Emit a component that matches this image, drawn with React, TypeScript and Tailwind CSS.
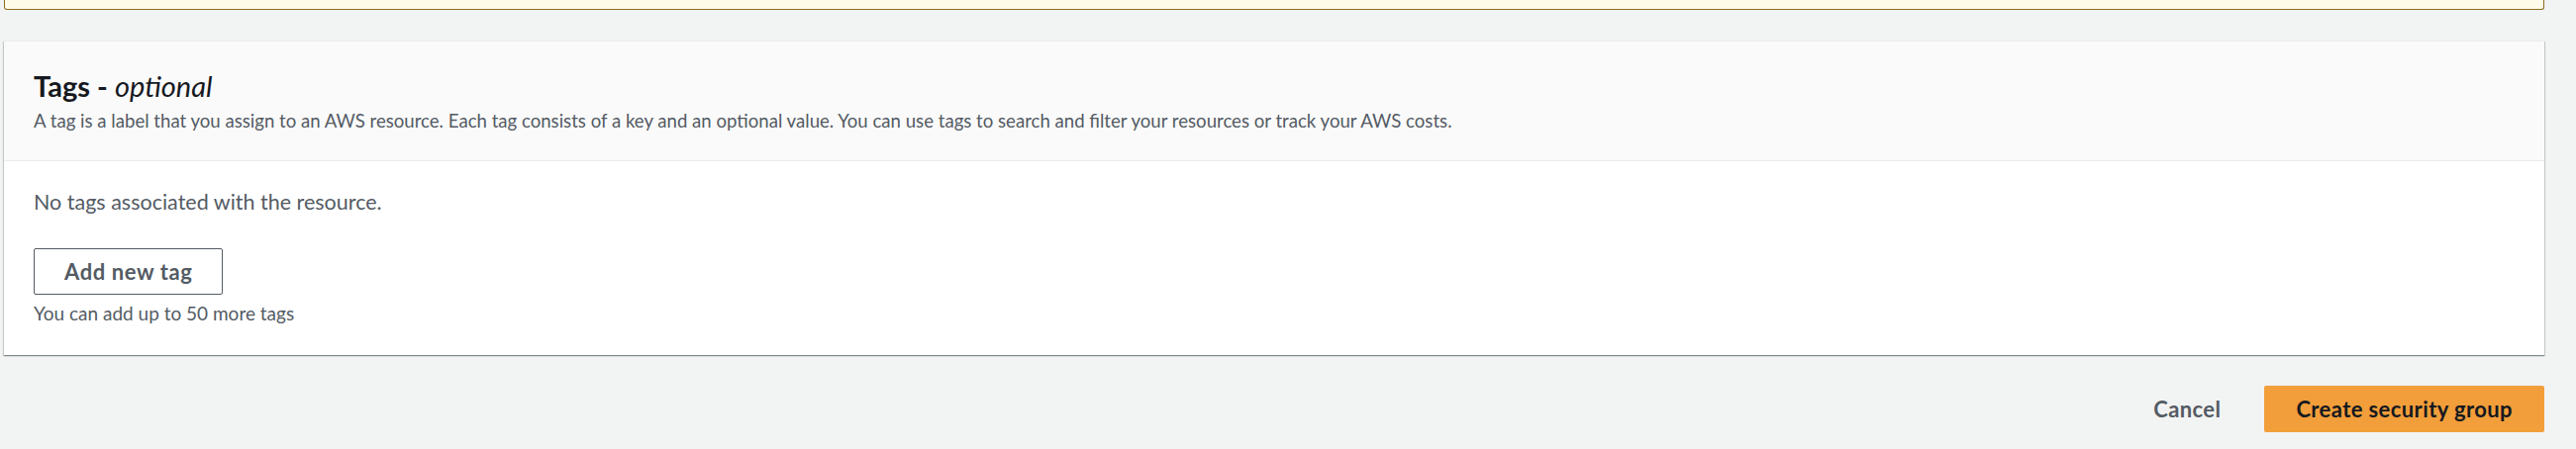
export default function App() {
  return (
    <div className="min-h-[454px] w-full bg-[#f2f3f3] pl-[4px] pr-[32px] font-['Lato',sans-serif]">
      {/* bottom edge of the warning alert above */}
      <div className="h-[10px] rounded-b-[3px] border-x border-b-[1.5px] border-[#8d6e22] bg-[#fffbe9]" />

      <div className="mt-[31px] bg-white shadow-[0_1px_1px_0_rgba(0,28,36,0.3),1px_1px_1px_0_rgba(0,28,36,0.15),-1px_1px_1px_0_rgba(0,28,36,0.15)] border-t border-[#eaeded]">
        <div className="border-b border-[#eaeded] bg-[#fafafa] px-[30px] pt-[27px] pb-[28px]">
          <h2 className="text-[29px] leading-[36px] font-bold text-[#16191f]">
            Tags - <i className="font-normal">optional</i>
          </h2>
          <p className="mt-[5px] text-[18.6px] leading-[24px] text-[#545b64]">
            A tag is a label that you assign to an AWS resource. Each tag consists of a key and an optional value. You can
            use tags to search and filter your resources or track your AWS costs.
          </p>
        </div>
        <div className="px-[30px] pt-[27px] pb-[30px]">
          <p className="text-[21.5px] leading-[28px] text-[#545b64]">No tags associated with the resource.</p>
          <button className="mt-[33px] flex h-[47px] items-center rounded-[2px] border border-[#545b64] bg-white px-[30px] text-[22px] font-bold tracking-[0.6px] text-[#545b64]">
            Add new tag
          </button>
          <p className="mt-[7px] text-[19px] leading-[24px] text-[#545b64]">You can add up to 50 more tags</p>
        </div>
      </div>

      <div className="mt-[31px] flex items-center justify-end gap-[12px]">
        <button className="h-[47px] px-[32px] text-[22px] font-bold tracking-[0.4px] text-[#545b64]">Cancel</button>
        <button className="h-[47px] rounded-[2px] bg-[#f29e3a] px-[32px] text-[22px] font-bold tracking-[0.4px] text-[#16191f]">
          Create security group
        </button>
      </div>
    </div>
  );
}
